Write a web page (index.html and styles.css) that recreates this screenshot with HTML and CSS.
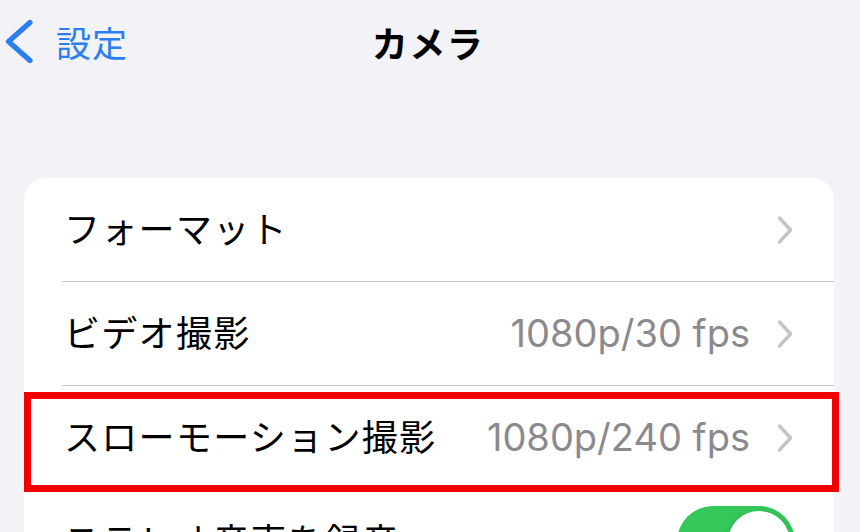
FILE: index.html
```html
<!DOCTYPE html>
<html lang="ja">
<head>
<meta charset="utf-8">
<title>カメラ</title>
<link rel="stylesheet" href="styles.css">
</head>
<body>
<div class="screen">
  <header class="nav">
    <div class="nav-left">
      <svg class="back-icon" width="40" height="86" viewBox="0 0 40 86" aria-hidden="true">
        <path d="M32 22.5 L10.5 41.5 L32 60.5" fill="none" stroke="#2a7ff0" stroke-width="5.2" stroke-linecap="round" stroke-linejoin="round"/>
      </svg>
      <span class="back-label">設定</span>
    </div>
    <h1 class="nav-title">カメラ</h1>
    <div class="nav-right"></div>
  </header>

  <section class="group">
    <div class="row">
      <span class="row-label">フォーマット</span>
      <span class="row-trail">
        <svg class="chev" width="20" height="30" viewBox="0 0 20 30" aria-hidden="true"><path d="M4.5 3 L15.5 15 L4.5 27" fill="none" stroke="#c4c4c7" stroke-width="3.4" stroke-linecap="round" stroke-linejoin="round"/></svg>
      </span>
    </div>
    <div class="row">
      <span class="row-label">ビデオ撮影</span>
      <span class="row-trail">
        <span class="row-value">1080p/30 fps</span>
        <svg class="chev" width="20" height="30" viewBox="0 0 20 30" aria-hidden="true"><path d="M4.5 3 L15.5 15 L4.5 27" fill="none" stroke="#c4c4c7" stroke-width="3.4" stroke-linecap="round" stroke-linejoin="round"/></svg>
      </span>
    </div>
    <div class="row row-highlight">
      <span class="row-label">スローモーション撮影</span>
      <span class="row-trail">
        <span class="row-value">1080p/240 fps</span>
        <svg class="chev" width="20" height="30" viewBox="0 0 20 30" aria-hidden="true"><path d="M4.5 3 L15.5 15 L4.5 27" fill="none" stroke="#c4c4c7" stroke-width="3.4" stroke-linecap="round" stroke-linejoin="round"/></svg>
      </span>
      <span class="highlight-box"></span>
    </div>
    <div class="row row-last">
      <span class="row-label">ステレオ音声を録音</span>
      <span class="toggle on"><span class="knob"></span></span>
    </div>
  </section>
</div>
</body>
</html>
```

FILE: styles.css
```css
* { box-sizing: border-box; }

html, body {
  margin: 0;
  padding: 0;
  background: #f2f2f7;
}

body {
  width: 860px;
  height: 532px;
  overflow: hidden;
  font-family: "Inter", "Noto Sans CJK JP", sans-serif;
  color: #000;
}

.screen {
  display: flex;
  flex-direction: column;
}

.nav {
  height: 86px;
  display: grid;
  grid-template-columns: 1fr auto 1fr;
  align-items: center;
}

.nav-left {
  display: flex;
  align-items: center;
  height: 86px;
}

.back-icon {
  display: block;
  margin-left: -2px;
}

.back-label {
  margin-left: 18px;
  font-family: "Noto Sans CJK JP", sans-serif;
  font-size: 35px;
  letter-spacing: 1px;
  color: #2a7ff0;
  line-height: 1;
  padding-bottom: 3px;
}

.nav-title {
  margin: 0 0 0 -4px;
  font-family: "Noto Sans CJK JP", sans-serif;
  font-size: 36px;
  letter-spacing: 1.5px;
  font-weight: 700;
  line-height: 1;
  padding-bottom: 3px;
}

.group {
  margin: 92px 26px 0 24px;
  background: #fff;
  border-radius: 22px 22px 0 0;
}

.row {
  position: relative;
  height: 103px;
  display: flex;
  align-items: center;
  justify-content: space-between;
  padding: 0 39px 0 40px;
}

.row::after {
  content: "";
  position: absolute;
  left: 38px;
  right: 0;
  bottom: -1px;
  height: 1px;
  background: #c8c8cb;
}

.row-last::after,
.row-highlight::after { display: none; }

.row-label {
  font-family: "Noto Sans CJK JP", sans-serif;
  font-size: 36px;
  letter-spacing: 1.3px;
  line-height: 1;
  white-space: nowrap;
  padding-bottom: 5px;
}

.row-trail {
  display: flex;
  align-items: center;
  gap: 25px;
}

.row-value {
  font-size: 38px;
  color: #8a8a8e;
  line-height: 1;
  letter-spacing: 0;
  padding-bottom: 2px;
}

.chev { display: block; }

.row + .row { margin-top: 1px; }

.highlight-box {
  position: absolute;
  left: 0;
  right: -5px;
  top: 6px;
  bottom: -3px;
  border: 7px solid #f00000;
  pointer-events: none;
}

.toggle {
  position: relative;
  width: 118px;
  height: 72px;
  border-radius: 36px;
  background: #34c759;
  flex: none;
}

.knob {
  position: absolute;
  top: 5px;
  right: 5px;
  width: 62px;
  height: 62px;
  border-radius: 50%;
  background: #fff;
  box-shadow: 0 2px 6px rgba(0,0,0,0.15);
}
```
